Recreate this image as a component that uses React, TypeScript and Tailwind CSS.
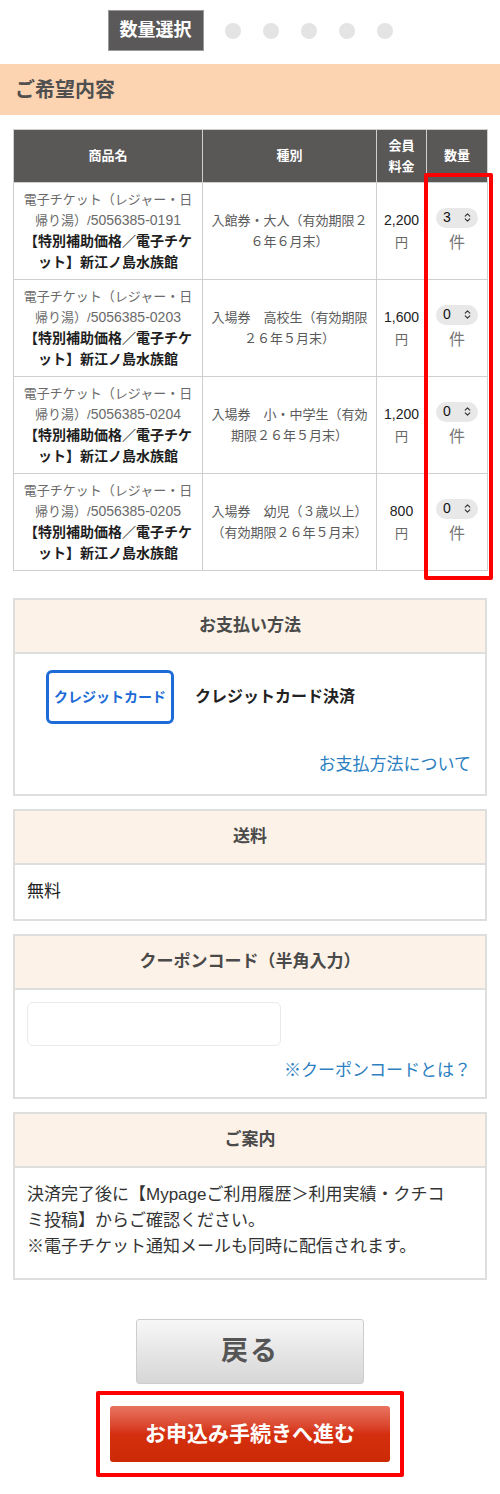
import { ChevronsUpDown } from 'lucide-react';

const font = { fontFamily: '"Liberation Sans", "Noto Sans CJK JP", sans-serif' };

const items = [
  { code: '5056385-0191', kind: '入館券・大人（有効期限２６年６月末）', price: '2,200', qty: 3 },
  { code: '5056385-0203', kind: '入場券　高校生（有効期限２６年５月末）', price: '1,600', qty: 0 },
  { code: '5056385-0204', kind: '入場券　小・中学生（有効期限２６年５月末）', price: '1,200', qty: 0 },
  { code: '5056385-0205', kind: '入場券　幼児（３歳以上）（有効期限２６年５月末）', price: '800', qty: 0 },
];

function Section({ title, children }: { title: string; children: React.ReactNode }) {
  return (
    <div className="mx-[13px] border-2 border-[#dedede] bg-white">
      <div className="h-[54px] flex items-center justify-center bg-[#fdf2e7] border-b-2 border-[#dedede] text-[17px] font-bold text-[#4a4a4a]">
        {title}
      </div>
      {children}
    </div>
  );
}

export default function App() {
  return (
    <div className="w-[500px] bg-white pb-[18px]" style={font}>
      {/* step indicator */}
      <div className="pt-[10px] flex items-center justify-center gap-[21px]">
        <div className="w-[96px] h-[41px] bg-[#5a5858] border border-[#9a9a9a] flex items-center justify-center text-white text-[18px] font-bold">
          数量選択
        </div>
        <div className="flex gap-[22px]">
          {[0, 1, 2, 3, 4].map((i) => (
            <span key={i} className="w-[16px] h-[16px] rounded-full bg-[#e4e4e4]" />
          ))}
        </div>
      </div>

      <div className="mt-[13px] h-[51px] bg-[#fdd4b1] flex items-center pl-[15px] text-[20px] font-bold text-[#4f4f4f]">
        ご希望内容
      </div>

      {/* order table */}
      <div className="relative mx-[13px] mt-[14px]">
        <table className="w-[474px] table-fixed border-collapse">
          <colgroup>
            <col className="w-[189px]" />
            <col className="w-[174px]" />
            <col className="w-[50px]" />
            <col className="w-[61px]" />
          </colgroup>
          <thead>
            <tr className="h-[53px] bg-[#5a5757] text-white text-[13px] font-bold">
              <th className="border border-[#cfcfcf]">商品名</th>
              <th className="border border-[#cfcfcf]">種別</th>
              <th className="border border-[#cfcfcf] leading-[21px]">会員<br />料金</th>
              <th className="border border-[#cfcfcf]">数量</th>
            </tr>
          </thead>
          <tbody>
            {items.map((item) => (
              <tr key={item.code}>
                <td className="border border-[#cfcfcf] px-2 py-[6px] text-center">
                  <div className="text-[13px] leading-[21px] text-[#6a6a6a]">
                    電子チケット（レジャー・日帰り湯）/<span className="text-[14px]">{item.code}</span>
                  </div>
                  <div className="text-[14px] leading-[21px] font-bold text-[#1e1e1e]">【特別補助価格／電子チケット】新江ノ島水族館</div>
                </td>
                <td className="border border-[#cfcfcf] px-2 text-center text-[13px] leading-[21px] text-[#5a5a5a]">
                  {item.kind}
                </td>
                <td className="border border-[#cfcfcf] px-0 text-center text-[14px] leading-[22px] text-[#222]">
                  {item.price}
                  <br />
                  <span className="text-[13px] text-[#666]">円</span>
                </td>
                <td className="border border-[#cfcfcf] text-center">
                  <div className="flex flex-col items-center gap-[3px]">
                    <div className="w-[42px] h-[20px] rounded-full bg-[#e8e8e8] flex items-center justify-between pl-[7px] pr-[5px] text-[14px] text-[#111]">
                      <span>{item.qty}</span>
                      <ChevronsUpDown className="w-[11px] h-[11px] text-[#333]" strokeWidth={2.5} />
                    </div>
                    <span className="text-[16px] text-[#777]">件</span>
                  </div>
                </td>
              </tr>
            ))}
          </tbody>
        </table>
        <div className="absolute left-[411px] top-[44px] w-[69px] h-[407px] border-4 border-[#ff0000] rounded-[2px]" />
      </div>

      <div className="mt-[27px] flex flex-col gap-[13px]">
        <Section title="お支払い方法">
          <div className="pt-[16px] pb-[17px]">
            <div className="flex items-center pl-[31px] gap-[21px]">
              <div className="w-[128px] h-[54px] border-[3px] border-[#1c6bd6] rounded-[6px] flex items-center justify-center text-[14px] font-bold text-[#1c6bd6]">
                クレジットカード
              </div>
              <span className="text-[16px] font-bold text-[#222]">クレジットカード決済</span>
            </div>
            <div className="mt-[29px] pr-[14px] text-right text-[17px] text-[#2c7fc0] leading-[24px]">
              お支払方法について
            </div>
          </div>
        </Section>

        <Section title="送料">
          <div className="h-[54px] flex items-center pl-[12px] text-[17px] text-[#222]">無料</div>
        </Section>

        <Section title="クーポンコード（半角入力）">
          <div className="pt-[12px] pb-[14px] px-[12px]">
            <div className="w-[254px] h-[44px] border border-[#eaeaea] rounded-[6px]" />
            <div className="mt-[13px] pr-[2px] text-right text-[17px] text-[#2c7fc0] leading-[24px]">
              ※クーポンコードとは？
            </div>
          </div>
        </Section>

        <Section title="ご案内">
          <div className="px-[12px] pt-[14px] pb-[18px] text-[17px] leading-[26px] text-[#333]">
            決済完了後に【Mypageご利用履歴＞利用実績・クチコ
            <br />
            ミ投稿】からご確認ください。
            <br />
            ※電子チケット通知メールも同時に配信されます。
          </div>
        </Section>
      </div>

      {/* buttons */}
      <div className="mt-[39px] flex flex-col items-center gap-[7px]">
        <button className="w-[228px] h-[65px] rounded-[3px] border border-[#cdcdcd] bg-gradient-to-b from-[#f7f7f7] to-[#d6d6d6] text-[27px] font-bold text-[#555] tracking-[2px]">
          戻る
        </button>
        <div className="border-4 border-[#ff0000] rounded-[2px] px-[10px] py-[11px]">
          <button className="w-[280px] h-[56px] rounded-[3px] bg-gradient-to-b from-[#e8735f] via-[#d42f0e] to-[#cc2a06] text-[21px] font-bold text-white">
            お申込み手続きへ進む
          </button>
        </div>
      </div>
    </div>
  );
}
